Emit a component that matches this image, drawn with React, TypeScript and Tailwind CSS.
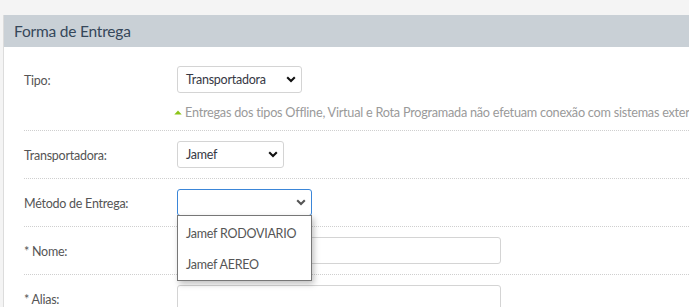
import React from "react";

const font = { fontFamily: "Lato, 'Open Sans', sans-serif" };

function Chevron({ color = "#111" }: { color?: string }) {
  return (
    <svg width="10" height="7" viewBox="0 0 10 7" className="shrink-0">
      <polyline points="1.2,1.3 5,5 8.8,1.3" fill="none" stroke={color} strokeWidth="2.1" />
    </svg>
  );
}

function Select({ w, text, focus, chevColor }: { w: string; text?: string; focus?: boolean; chevColor?: string }) {
  return (
    <div
      className={`${w} h-[27px] flex items-center justify-between pl-[8px] pr-[5px] rounded-[3px] bg-white border ${
        focus ? "border-[#3b86d8]" : "border-[#d4d4d4]"
      }`}
    >
      <span className="pt-[2px] text-[12.5px] tracking-[-0.25px] text-[#363844]">{text}</span>
      <Chevron color={chevColor} />
    </div>
  );
}

function Row({ label, children, first }: { label: string; children: React.ReactNode; first?: boolean }) {
  return (
    <div className={`flex border-b border-dotted border-[#cfcfcf] ${first ? "pt-[19px] pb-[7px]" : "py-[10px]"}`}>
      <div className="w-[153px] shrink-0 h-[27px] pt-[3px] flex items-center text-[12.5px] tracking-[-0.25px] text-[#555]">
        {label}
      </div>
      <div className="flex-1 min-w-0">{children}</div>
    </div>
  );
}

export default function App() {
  return (
    <div className="w-[689px] h-[307px] overflow-hidden bg-[#f4f4f4] pt-[15px] pl-[3px]" style={font}>
      <div className="w-[800px] h-[400px] bg-white border-l border-[#dcdcdc]">
        <div className="h-[32px] bg-[#c9d0d6] flex items-center pl-[10px] pt-[1px] text-[15.5px] tracking-[-0.2px] text-[#35475a]">
          Forma de Entrega
        </div>
        <div className="pl-[20px]">
          <Row label="Tipo:" first>
            <Select w="w-[125px]" text="Transportadora" />
            <div className="mt-[8px] h-[22px] flex items-center whitespace-nowrap text-[12.7px] tracking-[-0.25px] text-[#9a9a9a]">
              <svg width="8" height="5" viewBox="0 0 8 5" className="ml-[-3px] mr-[3px]">
                <polygon points="0.3,4.6 4,0.6 7.7,4.6" fill="#8cc418" />
              </svg>
              <span className="pt-[2px]">
                Entregas dos tipos Offline, Virtual e Rota Programada não efetuam conexão com sistemas externos
              </span>
            </div>
          </Row>
          <Row label="Transportadora:">
            <Select w="w-[107px]" text="Jamef" />
          </Row>
          <Row label="Método de Entrega:">
            <div className="relative">
              <Select w="w-[135px]" focus chevColor="#555" />
              <div className="absolute left-0 top-[26px] z-10 w-[135px] h-[66px] bg-white border border-[#777] shadow-[2px_3px_6px_rgba(0,0,0,0.25)] flex flex-col pt-[1px] pl-[8px]">
                <div className="h-[32px] pt-[3px] flex items-center whitespace-nowrap text-[12.5px] tracking-[-0.25px] text-[#555]">
                  Jamef RODOVIARIO
                </div>
                <div className="h-[32px] pt-[3px] flex items-center whitespace-nowrap text-[12.5px] tracking-[-0.25px] text-[#555]">
                  Jamef AEREO
                </div>
              </div>
            </div>
          </Row>
          <Row label="* Nome:">
            <div className="w-[324px] h-[27px] rounded-[3px] border border-[#d4d4d4] bg-white" />
          </Row>
          <Row label="* Alias:">
            <div className="w-[324px] h-[27px] rounded-[3px] border border-[#d4d4d4] bg-white" />
          </Row>
        </div>
      </div>
    </div>
  );
}
